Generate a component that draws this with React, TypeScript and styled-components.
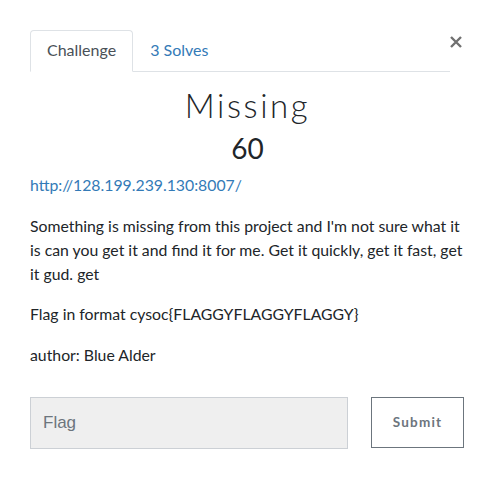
import React from "react";
import styled, { createGlobalStyle } from "styled-components";

const Global = createGlobalStyle`
  html, body { margin: 0; padding: 0; background: #fff; }
  body { font-family: Lato, "Open Sans", sans-serif; color: #212529; }
  * { box-sizing: border-box; }
`;

const Modal = styled.div`
  width: 496px;
  height: 496px;
  padding: 30px 31px 0 30px;
  position: relative;
`;

const Close = styled.button`
  position: absolute;
  top: 30px;
  right: 32px;
  border: 0;
  background: none;
  padding: 0;
  width: 16px;
  height: 24px;
  display: flex;
  align-items: center;
  justify-content: center;
  cursor: pointer;
`;

const Tabs = styled.ul`
  list-style: none;
  margin: 0;
  padding: 0;
  width: 420px;
  display: flex;
  border-bottom: 1px solid #dee2e6;
`;

const Tab = styled.li<{ $active?: boolean }>`
  margin-bottom: -1px;
  padding: 8px 16px 10px;
  font-size: 16px;
  line-height: 22px;
  border: 1px solid ${(p) => (p.$active ? "#dee2e6" : "transparent")};
  border-bottom-color: ${(p) => (p.$active ? "#fff" : "transparent")};
  border-radius: 4px 4px 0 0;
  background: ${(p) => (p.$active ? "#fff" : "transparent")};
  color: ${(p) => (p.$active ? "#495057" : "#337ab7")};
`;

const Title = styled.h2`
  margin: 15px 0 0;
  text-align: center;
  font-family: Lato, sans-serif;
  font-weight: 300;
  font-size: 33px;
  letter-spacing: 2.6px;
  line-height: 36px;
  color: #212529;
`;

const Points = styled.h3`
  margin: 8px 0 0;
  text-align: center;
  font-weight: 400;
  font-size: 28px;
  line-height: 34px;
  color: #212529;
`;

const Link = styled.a`
  display: block;
  margin-top: 8px;
  font-size: 15.8px;
  line-height: 24px;
  color: #337ab7;
  text-decoration: none;
`;

const Para = styled.p`
  margin: 16.5px 0 0;
  font-size: 15.8px;
  line-height: 24px;
  color: #212529;
`;

const Form = styled.form`
  margin-top: 30px;
  display: flex;
  gap: 23px;
  width: 434px;
`;

const Input = styled.input`
  width: 318px;
  height: 52px;
  background: #efefef;
  border: 1px solid #ccd0d5;
  padding: 0 12px;
  font-family: "Liberation Sans", Arial, sans-serif;
  font-size: 17px;
  color: #495057;
  outline: none;
  &::placeholder { color: #6c757d; }
`;

const Submit = styled.button`
  width: 93px;
  height: 51px;
  background: #fff;
  border: 1px solid #6c757d;
  font-family: Lato, sans-serif;
  font-weight: 700;
  font-size: 13.5px;
  letter-spacing: 1.2px;
  color: #6c757d;
  padding: 0;
`;

export default function App() {
  return (
    <>
      <Global />
      <Modal>
        <Close aria-label="Close">
          <svg width="12" height="12" viewBox="0 0 12 12">
            <path d="M1 1L11 11M11 1L1 11" stroke="#707070" strokeWidth="2.4" />
          </svg>
        </Close>
        <Tabs>
          <Tab $active>Challenge</Tab>
          <Tab>3 Solves</Tab>
        </Tabs>
        <Title>Missing</Title>
        <Points>60</Points>
        <Link href="#">http://128.199.239.130:8007/</Link>
        <Para>
          Something is missing from this project and I'm not sure what it is can you get it and find it for me. Get it quickly, get it fast, get it gud. get
        </Para>
        <Para>Flag in format cysoc{"{"}FLAGGYFLAGGYFLAGGY{"}"}</Para>
        <Para>author: Blue Alder</Para>
        <Form onSubmit={(e) => e.preventDefault()}>
          <Input placeholder="Flag" />
          <Submit type="submit">Submit</Submit>
        </Form>
      </Modal>
    </>
  );
}
